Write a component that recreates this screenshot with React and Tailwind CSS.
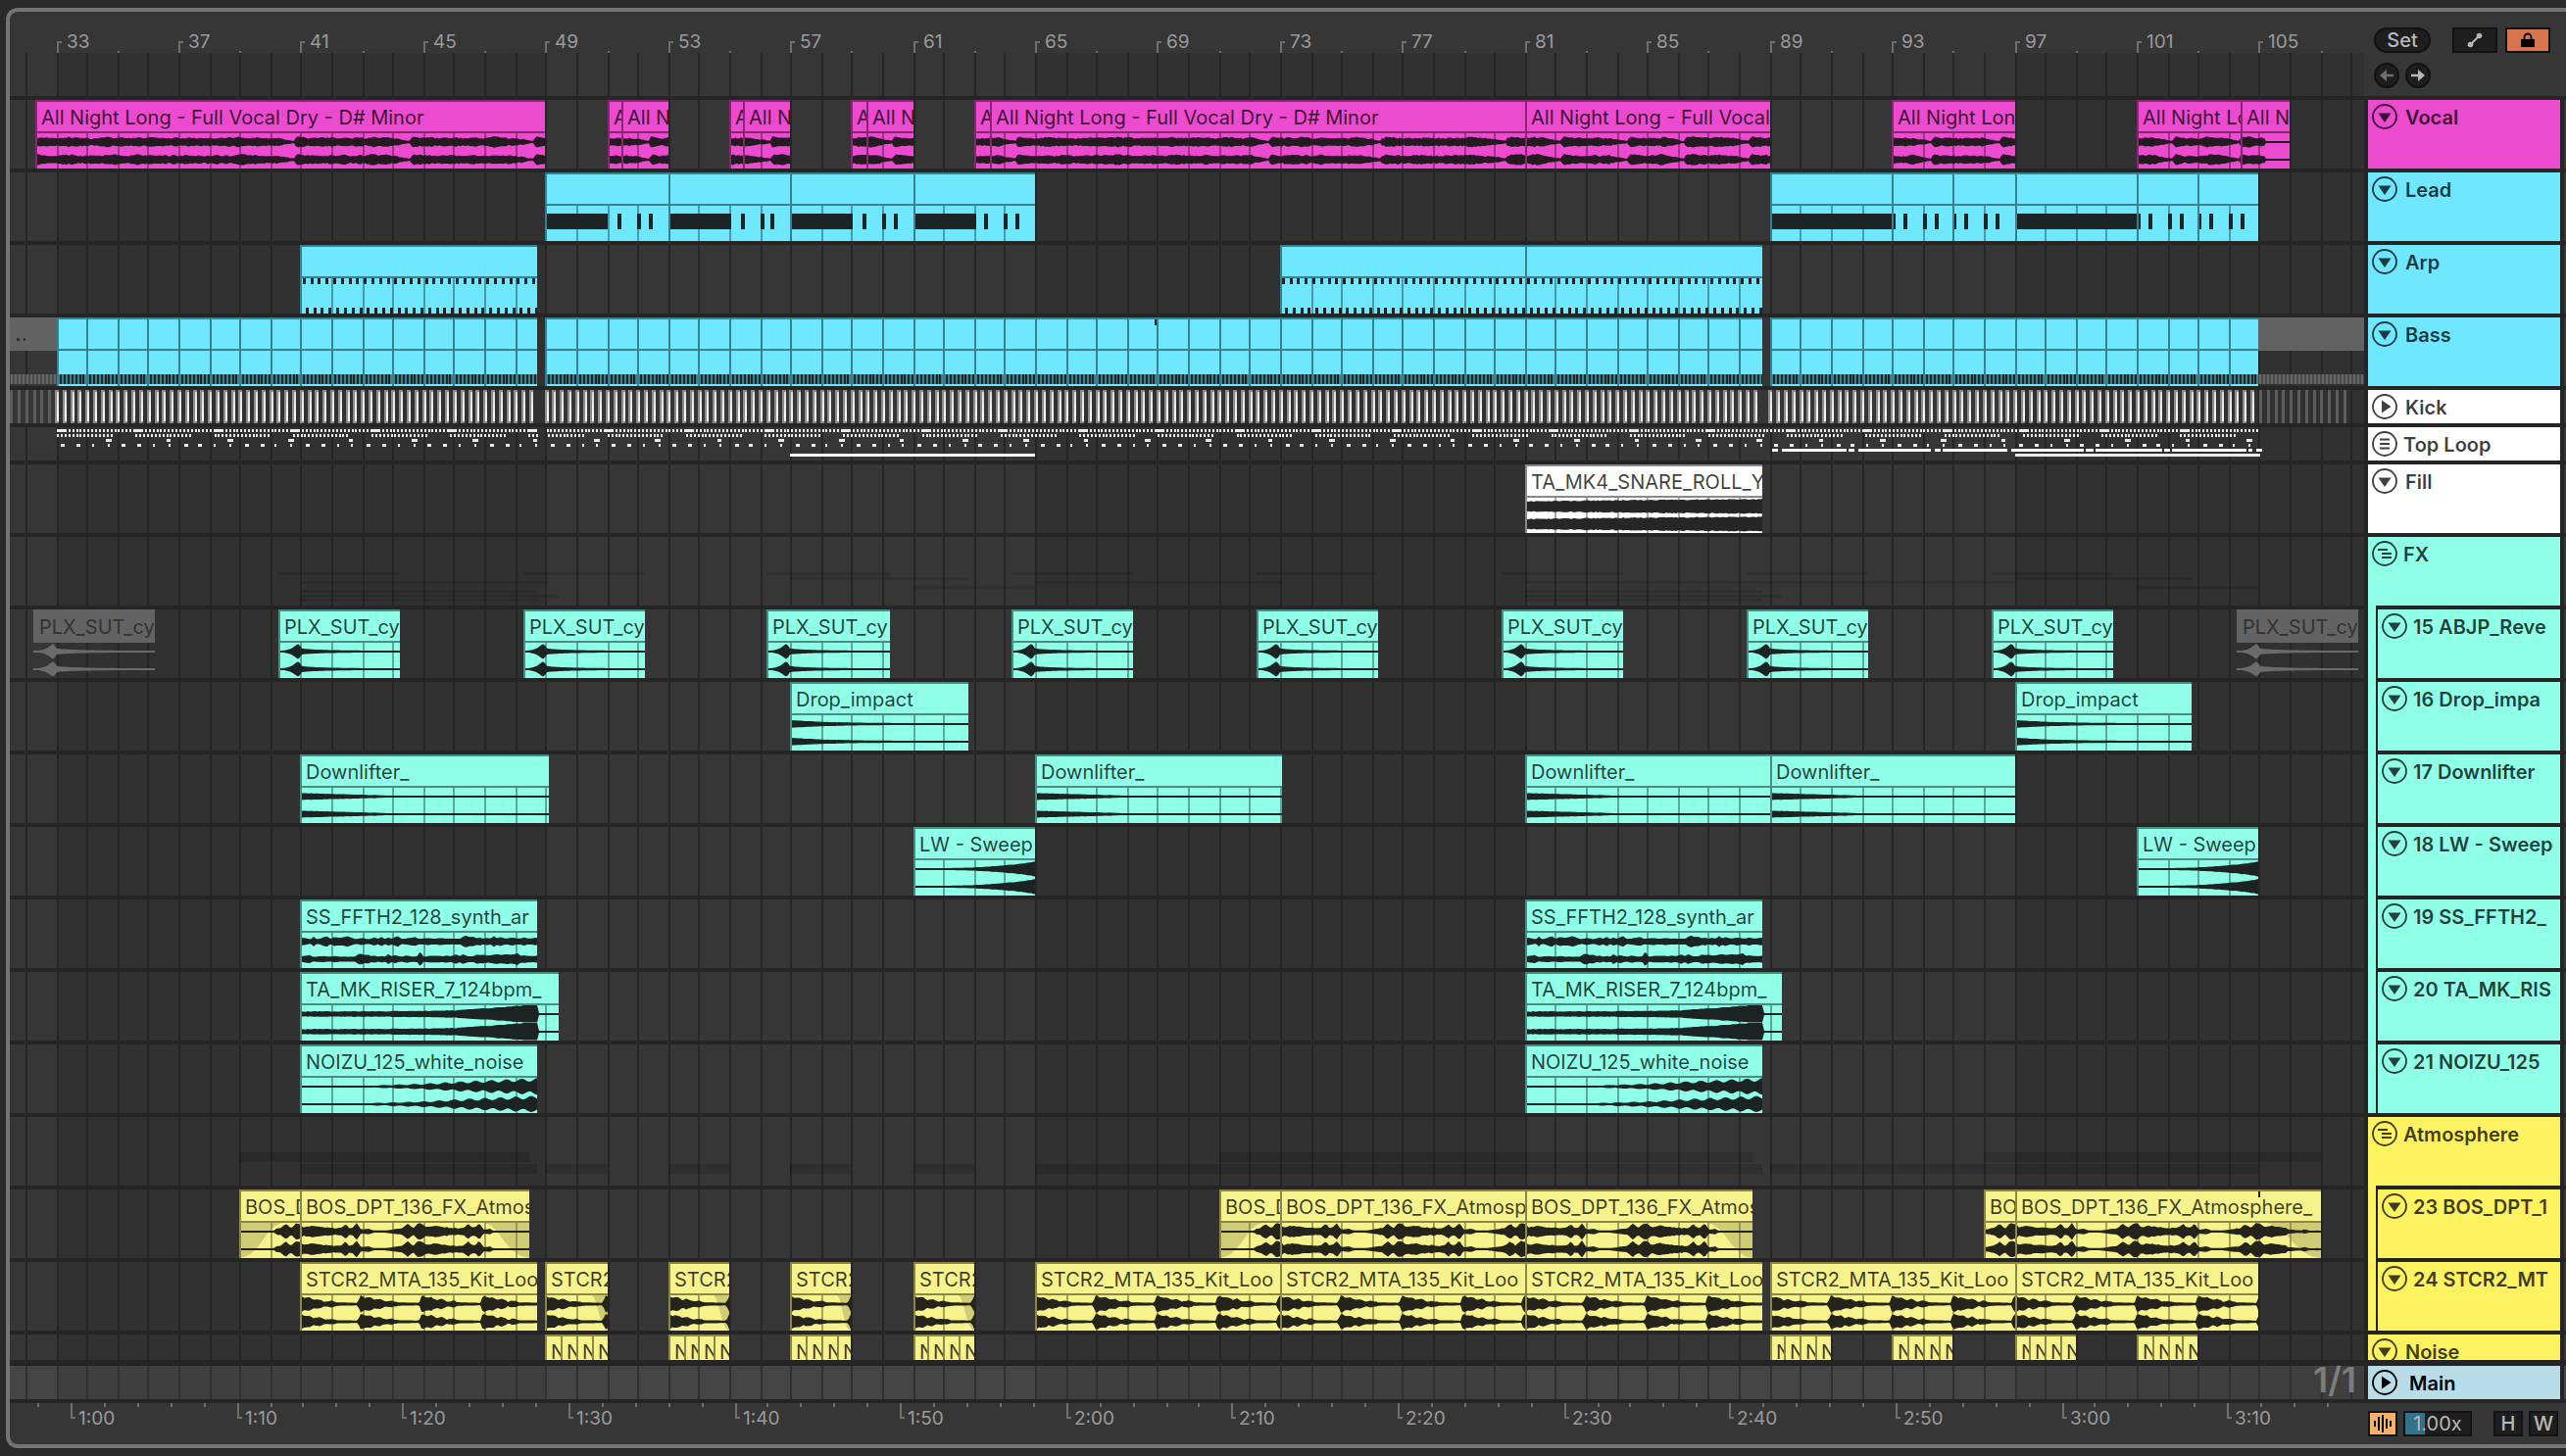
import clsx from 'clsx'

// Timeline geometry: lanes are drawn in LANE_W units and scale with the window
const LANE_W = 2402
const BAR_W = 31.22
const ORIGIN = 47.05

const snap = (v) => Math.round(v / 2) * 2
const rawX = (bar) => ORIGIN + (bar - 33) * BAR_W
const barX = (bar) => snap(rawX(bar))
const timeX = (sec) => snap(62 + (sec - 60) * 16.925)
const pct = (units) => `${(units / LANE_W) * 100}%`
const range = (from, to, step = 1) => {
  const out = []
  for (let v = from; v <= to + 1e-6; v += step) out.push(v)
  return out
}

const BARS = range(32, 108)

const PALETTE = {
  pink: { clip: 'bg-[#ec4bcf]', border: 'border-[#84296f]', head: 'bg-[#ec4bcf]', line: '#84296f', wave: '#241a22' },
  cyan: { clip: 'bg-[#6ee7ff]', border: 'border-[#3a818f]', head: 'bg-[#6ee7ff]', line: '#3a818f', wave: '#1c2426' },
  white: { clip: 'bg-white', border: 'border-[#8a8a8a]', head: 'bg-white', line: '#8a8a8a', wave: '#262626' },
  mint: { clip: 'bg-[#8fffe8]', border: 'border-[#4b8b80]', head: 'bg-[#8fffe8]', line: '#4b8b80', wave: '#1c2423' },
  yellow: { clip: 'bg-[#f7f38c]', border: 'border-[#8a8749]', head: 'bg-[#fdf25f]', line: '#8a8749', wave: '#24241c' },
  blue: { head: 'bg-[#b8dde8]' },
}

/* ---------- waveforms ---------- */

const hash = (n) => {
  const s = Math.sin(n * 127.1 + 11.7) * 43758.5453
  return s - Math.floor(s)
}
const noise = (t) => {
  const i = Math.floor(t)
  const f = t - i
  return hash(i) * (1 - f) + hash(i + 1) * f
}
const keyed = (keys, t) => {
  for (let i = 1; i < keys.length; i++) {
    const [t1, v1] = keys[i]
    const [t0, v0] = keys[i - 1]
    if (t <= t1) return v0 + ((v1 - v0) * (t - t0)) / (t1 - t0)
  }
  return keys[keys.length - 1][1]
}

const VOCAL_DIPS = [40.85, 44.6, 48.65, 52.35, 56.35, 60.35, 64.35, 72.6, 76.3, 80.4, 82.2, 84.35, 86.2, 88.35, 94.3, 96.55, 102.2, 104.35]

const ATMOS = [
  [0, 8], [0.12, 4.5], [0.4, 6], [0.7, 4.5], [1.2, 3.5], [1.35, 4], [1.5, 8], [1.6, 4], [1.72, 4], [1.86, 8.5],
  [2, 2], [2.25, 3], [2.4, 1.2], [2.8, 1.2], [3.1, 2.5], [3.35, 3.5], [3.52, 8], [3.7, 3.5], [3.87, 8.5], [4, 8],
]

const KIT = [
  [0, 9], [0.12, 6.5], [0.3, 7], [0.45, 4], [0.6, 5.5], [0.8, 2.5], [1, 3.5], [1.2, 1.8], [1.6, 1.6], [1.9, 1.2], [1.95, 7], [2, 9],
]

const ENVELOPES = {
  vocal: (bar, t, ch) => {
    if (bar > 105.2) return 1
    let amp = 3 + 2.6 * noise(bar * 7 + ch * 3) * noise(bar * 3 + 50) + 1.3 * hash(Math.floor(bar * 14) + ch)
    for (const dip of VOCAL_DIPS) {
      const d = bar - dip
      if (d > -0.6 && d <= 0) amp *= 0.25 + 0.75 * (-d / 0.6)
      if (d > 0.08 && d < 0.3) amp = Math.max(amp, 6.5 - d * 8)
    }
    return amp
  },
  snare: (bar, t) => 4.9 + t * 0.28 + 1.1 * hash(Math.floor(bar * 16)),
  plx: (bar, t) => {
    if (t < 0.62) return 1 + 7 * Math.pow(t / 0.62, 3)
    if (t < 0.8) return keyed([[0.62, 8], [0.7, 7], [0.72, 4], [0.8, 2.8]], t)
    return 1 + 2 * Math.exp(-(t - 0.8) * 1.4)
  },
  drop: (bar, t) => 1 + 3 * Math.exp(-t * 0.9) + (t < 2 ? 0.3 * noise(t * 20) : 0),
  down: (bar, t) => Math.max(1, 3.4 - t * 0.8) + (t < 2.5 ? 0.3 * noise(t * 20) : 0),
  sweep: (bar, t) => 1 + 6.6 * Math.pow(t / 4, 3.3) + (t > 2 ? 0.5 * noise(t * 30) : 0),
  synth: (bar, t, ch) => 2.3 + 3.2 * Math.pow(noise(t * 9 + ch * 31), 2) + (ch && Math.abs(t - 3.95) < 0.08 ? 3 : 0) + t * 0.12,
  riser: (bar, t) => (t > 7.77 ? 1 : keyed([[0, 2.2], [3, 2.6], [5, 3.4], [6.3, 6], [7.2, 8.2], [7.77, 9.4]], t) + 0.7 * noise(t * 16)),
  noizu: (bar, t, ch) => {
    const base = keyed([[0, 1], [2.4, 1.1], [4, 2.4], [5.5, 4.6], [7.7, 7]], t)
    return base * (1 + (t > 2.4 ? 0.25 : 0) * Math.cos((t - (ch ? 7.05 : 7.25)) * 12.5))
  },
  atmos: (bar, t, ch, end) => {
    const amp = keyed(ATMOS, (((bar - 41) % 4) + 4) % 4)
    const jag = amp > 3 ? 1.2 * (noise(bar * 16 + ch) - 0.5) : 0
    let fade = 1
    if (t < 1.2 && Math.round(bar - t) % 8 === 7) fade = Math.max(0.1, Math.pow(t / 1.6, 2))
    if (end - bar < 1.2 && end % 1 !== 0) fade = Math.max(0.15, (end - bar) / 2)
    return Math.max(1, (amp + jag) * fade)
  },
  kit: (bar, t, ch) => {
    const amp = keyed(KIT, t % 2)
    return Math.max(1, amp * (ch ? 0.92 : 1) + (amp > 2 ? 1.2 * (noise(bar * 14 + ch * 5) - 0.5) : 0))
  },
}

function wavePath(kind, start, end, ch) {
  const x0 = barX(start)
  const x1 = barX(end)
  const mid = ch ? 27 : 9
  const top = []
  const bottom = []
  for (let x = x0; x <= x1; x += 2) {
    const bar = start + (x - x0) / BAR_W
    const amp = Math.min(9, ENVELOPES[kind](bar, bar - start, ch, end))
    top.push(`${x},${(mid - amp).toFixed(1)}`)
    bottom.unshift(`${x},${(mid + amp * 0.95).toFixed(1)}`)
  }
  return `M${top.join('L')}L${bottom.join('L')}Z`
}

/* ---------- note patterns ---------- */

const Note = ({ start, len, y, h, fill = '#1c2426' }) => (
  <rect x={barX(start)} y={y} width={Math.max(2, snap(len * BAR_W))} height={h} fill={fill} />
)

function ClipNotes({ kind, start, end }) {
  if (kind === 'lead') {
    return (
      <>
        <Note start={start} len={2.06} y={8} h={16} />
        {[2.36, 3, 3.36].map((o) => <Note key={o} start={start + o} len={0.1} y={8} h={16} />)}
      </>
    )
  }
  if (kind === 'hold') return <Note start={start} len={4} y={8} h={16} />
  if (kind === 'stab') {
    return [0, 0.38, 1, 1.4].map((o) => <Note key={o} start={start + o} len={0.1} y={8} h={16} />)
  }
  if (kind === 'arp') {
    return range(start, end - 0.05, 0.25).map((b) => (
      <g key={b}>
        <rect x={rawX(b) + 2} y="0" width="3" height="6" fill="#1c2426" />
        <rect x={rawX(b + 0.13) + 1} y="30" width="3" height="6" fill="#1c2426" />
      </g>
    ))
  }
  if (kind === 'bass') {
    return (
      <>
        <rect x={barX(start)} y="24" width={BAR_W + 2} height="10" fill="#3a818f" />
        {range(0, 7).map((i) => (
          <rect key={i} x={barX(start) + 3 + i * 3.9} y="24" width="2" height="10" fill="#1c2426" />
        ))}
      </>
    )
  }
  return null
}

/* ---------- clips ---------- */

function Clip({ start, end, label, kind, color, fadeIn, fadeOut, muted }) {
  const c = PALETTE[color]
  const x0 = barX(start)
  const x1 = barX(end)
  const inset = muted ? 0 : 2
  const isWave = kind in ENVELOPES
  return (
    <div
      className={clsx(
        'absolute top-0 h-full overflow-hidden',
        muted ? 'text-[#333333]' : ['border-t-2 border-l-2 text-black/75', c.clip, c.border],
      )}
      style={{ left: pct(x0), width: pct(x1 - x0) }}
    >
      <div
        className={clsx(
          'overflow-hidden text-xl whitespace-nowrap',
          muted ? 'h-[34px] bg-[#636363] pl-1.5 leading-9' : ['h-8 border-b-2 pl-1 leading-8', c.border],
        )}
      >
        {label}
      </div>
      <svg
        className="block h-9 w-full"
        viewBox={`${x0 + inset} 0 ${x1 - x0 - inset} 36`}
        preserveAspectRatio="none"
        aria-hidden="true"
      >
        {fadeIn && (
          <path
            d={`M${x0},0H${barX(start + fadeIn)}C${barX(start + fadeIn * 0.6)},4 ${barX(start + fadeIn * 0.5)},34 ${x0},36Z`}
            fill="#000" opacity="0.16"
          />
        )}
        {fadeOut && (
          <path
            d={`M${x1},0H${barX(end - fadeOut)}C${barX(end - fadeOut * 0.6)},4 ${barX(end - fadeOut * 0.5)},34 ${x1},36Z`}
            fill="#000" opacity="0.16"
          />
        )}
        <g shapeRendering="crispEdges">
          {!muted && BARS.filter((b) => b > start && b < end).map((b) => (
            <rect key={b} x={barX(b)} y="0" width="2" height="36" fill={c.line} opacity="0.75" />
          ))}
          {!isWave && <ClipNotes kind={kind} start={start} end={end} />}
        </g>
        {isWave && [0, 1].map((ch) => (
          <path key={ch} d={wavePath(kind, start, end, ch)} fill={muted ? '#6b6b6b' : c.wave} />
        ))}
      </svg>
    </div>
  )
}

/* ---------- lanes drawn without clips ---------- */

function LaneSvg({ height, children }) {
  return (
    <svg
      className="absolute inset-0 h-full w-full"
      viewBox={`0 0 ${LANE_W} ${height}`}
      preserveAspectRatio="none"
      shapeRendering="crispEdges"
      aria-hidden="true"
    >
      {children}
    </svg>
  )
}

function LaneGrid({ light = '#363636', dark = '#313131', line = '#252525' }) {
  return (
    <LaneSvg height={1}>
      <rect x="0" y="0" width={LANE_W} height="1" fill={light} />
      {[33, 65, 97].map((b) => (
        <rect key={b} x={barX(b)} y="0" width={16 * BAR_W} height="1" fill={dark} />
      ))}
      {BARS.map((b) => <rect key={b} x={barX(b)} y="0" width="2" height="1" fill={line} />)}
    </LaneSvg>
  )
}

function KickPattern() {
  return (
    <LaneSvg height={34}>
      <defs>
        <linearGradient id="kick" x1="0" y1="0" x2="0" y2="1">
          <stop offset="0" stopColor="#d8d8d8" />
          <stop offset="1" stopColor="#ffffff" />
        </linearGradient>
      </defs>
      {range(31.5, 107.75, 0.25).map((b) => {
        if ((b > 48.6 && b < 49) || (b > 88.6 && b < 89)) return null
        const x = Math.round(rawX(b))
        if (b < 33 || b >= 105) return <rect key={b} x={x} y="0" width="3" height="34" fill="#5c5c5c" />
        return (
          <g key={b}>
            <rect x={x - 1} y="0" width="4" height="34" fill="#8c8c8c" />
            <rect x={x + 1} y="2" width="2" height="30" fill="url(#kick)" />
          </g>
        )
      })}
    </LaneSvg>
  )
}

const SHAKER = [
  [89.1, 89.3], [89.38, 91.55], [91.6, 91.8], [91.88, 94.05], [94.1, 94.3], [94.38, 94.58], [94.63, 96.8],
  [96.88, 99.3], [99.36, 99.56], [99.64, 101.82], [101.88, 102.08], [102.16, 104.58], [104.66, 104.8], [104.88, 105.1],
]

function TopLoopPattern() {
  const gap = (b) => b > 48.7 && b < 49
  const cycles = range(0, 27).map((k) => 33 + k * 2.57)
  return (
    <LaneSvg height={34}>
      <g fill="#e9e9e6">
        {range(33, 104.95, 0.125).filter((b) => !gap(b)).map((b) => (
          <rect key={b} x={Math.round(rawX(b)) + 1} y="2" width="2" height="3" />
        ))}
        {cycles.map((b) => <rect key={b} x={barX(b)} y="2" width="8" height="3" />)}
        {cycles.flatMap((c) => range(c, Math.min(c + 1.85, 104.9), 0.125)).filter((b) => !gap(b)).map((b) => (
          <rect key={b} x={Math.round(rawX(b)) + 1} y="7" width="2" height="3" />
        ))}
        {range(34.6, 104.9, 2).map((b, i) => (
          <rect key={b} x={barX(b)} y="12" width={i % 3 === 1 ? 4 : 6} height="3" />
        ))}
        {range(33.17, 105, 0.5).map((b, i) => (
          <rect key={b} x={barX(b)} y="17" width={i % 4 < 2 ? 4 : 2} height="3" />
        ))}
      </g>
      {SHAKER.map(([a, b]) => (
        <rect key={a} x={barX(a)} y="22" width={barX(b) - barX(a)} height="3" fill="#ffffff" />
      ))}
      <rect x={barX(57)} y="27" width={8 * BAR_W} height="3" fill="#ffffff" />
      <rect x={barX(97)} y="27" width={8 * BAR_W} height="3" fill="#e9e9e6" />
    </LaneSvg>
  )
}

// Collapsed view of the clips of the grouped tracks
function GroupOverview({ tracks, top, pitch, size }) {
  return (
    <LaneSvg height={70}>
      {tracks.flatMap((track, i) =>
        track.clips.filter((c) => !c.muted).map((c) => (
          <rect
            key={`${i}-${c.start}`}
            x={barX(c.start)}
            y={top + i * pitch}
            width={barX(c.end) - barX(c.start)}
            height={size}
            fill="#000"
            opacity="0.13"
          />
        )),
      )}
    </LaneSvg>
  )
}

function BassTails() {
  return (
    <LaneSvg height={70}>
      {[[0, barX(33)], [barX(105), LANE_W]].map(([a, b]) => (
        <g key={a}>
          <rect x={a} y="0" width={b - a} height="34" fill="#636363" />
          <rect x={a} y="58" width={b - a} height="10" fill="#4a4a4a" />
          {range(a + 1, b - 3, 4).map((x) => <rect key={x} x={x} y="58" width="2" height="10" fill="#666666" />)}
        </g>
      ))}
      <rect x="7" y="21" width="3" height="3" fill="#333333" />
      <rect x="14" y="21" width="2" height="3" fill="#333333" />
    </LaneSvg>
  )
}

/* ---------- session data ---------- */

const clips = (spans, rest) => spans.map(([start, end, extra]) => ({ start, end, ...rest, ...extra }))

const perBar = (from, to) => range(from, Math.floor(to)).map((b) => [b, Math.min(b + 1, to)]).filter(([a, b]) => b > a)

const fxTracks = [
  {
    name: '15 ABJP_Reve',
    clips: clips(
      range(32.25, 104.25, 8).map((b) => [b, b + 3.98, { muted: b < 33 || b > 104 }]),
      { label: 'PLX_SUT_cy', kind: 'plx' },
    ),
  },
  { name: '16 Drop_impa', clips: clips([[57, 62.8], [97, 102.8]], { label: 'Drop_impact', kind: 'drop' }) },
  {
    name: '17 Downlifter',
    clips: clips([[41, 49.1], [65, 73.1], [81, 89], [89, 97]], { label: 'Downlifter_', kind: 'down' }),
  },
  { name: '18 LW - Sweep', clips: clips([[61, 65], [101, 105]], { label: 'LW - Sweep U', kind: 'sweep' }) },
  { name: '19 SS_FFTH2_', clips: clips([[41, 48.72], [81, 88.76]], { label: 'SS_FFTH2_128_synth_ar', kind: 'synth' }) },
  { name: '20 TA_MK_RIS', clips: clips([[41, 49.4], [81, 89.4]], { label: 'TA_MK_RISER_7_124bpm_', kind: 'riser' }) },
  { name: '21 NOIZU_125', clips: clips([[41, 48.72], [81, 88.76]], { label: 'NOIZU_125_white_noise', kind: 'noizu' }) },
]

const atmosTracks = [
  {
    name: '23 BOS_DPT_1',
    clips: clips(
      [
        [39, 41, { fadeIn: 1.4 }], [41, 48.45, { fadeOut: 1.45 }],
        [71, 73, { fadeIn: 1.4 }], [73, 81], [81, 88.45, { fadeOut: 1.45 }],
        [96, 97], [97, 107.05, { fadeOut: 1.8 }],
      ],
      { label: 'BOS_DPT_136_FX_Atmosphere_', kind: 'atmos' },
    ),
  },
  {
    name: '24 STCR2_MT',
    clips: clips(
      [
        [41, 48.72], [49, 51, { fadeOut: 0.5 }], [53, 55, { fadeOut: 0.5 }], [57, 59, { fadeOut: 0.5 }],
        [61, 63, { fadeOut: 0.5 }], [65, 73], [73, 81], [81, 88.76], [89, 97], [97, 105],
      ],
      { label: 'STCR2_MTA_135_Kit_Loo', kind: 'kit' },
    ),
  },
]

const VOCAL_LABEL = 'All Night Long - Full Vocal Dry - D# Minor'

const TRACKS = [
  {
    name: 'Vocal',
    color: 'pink',
    clips: clips(
      [
        [32.35, 49], [51, 51.45], [51.45, 53], [55, 55.45], [55.45, 57], [59, 59.5], [59.5, 61],
        [63, 63.5], [63.5, 81], [81, 89], [93, 97], [101, 104.4], [104.4, 106],
      ],
      { label: VOCAL_LABEL, kind: 'vocal' },
    ),
  },
  {
    name: 'Lead',
    color: 'cyan',
    clips: [
      ...clips([[49, 53], [53, 57], [57, 61], [61, 65]], { kind: 'lead' }),
      ...clips([[89, 93], [97, 101]], { kind: 'hold' }),
      ...clips([[93, 95], [95, 97], [101, 103], [103, 105]], { kind: 'stab' }),
    ],
  },
  { name: 'Arp', color: 'cyan', clips: clips([[41, 48.72], [73, 81], [81, 88.76]], { kind: 'arp' }) },
  {
    name: 'Bass',
    color: 'cyan',
    under: <BassTails />,
    clips: clips([...perBar(33, 48.72), ...perBar(49, 88.76), ...perBar(89, 105)], { kind: 'bass' }),
  },
  { name: 'Kick', color: 'white', icon: 'play', short: true, clips: [], under: <KickPattern /> },
  { name: 'Top Loop', color: 'white', icon: 'list', short: true, clips: [], under: <TopLoopPattern /> },
  { name: 'Fill', color: 'white', clips: clips([[81, 88.76]], { label: 'TA_MK4_SNARE_ROLL_Y', kind: 'snare' }) },
  {
    name: 'FX',
    color: 'mint',
    icon: 'group',
    clips: [],
    joined: true,
    under: <GroupOverview tracks={fxTracks} top={36} pitch={4.5} size={3} />,
  },
  ...fxTracks.map((t, i) => ({ ...t, color: 'mint', child: true, joined: i < fxTracks.length - 1 })),
  {
    name: 'Atmosphere',
    color: 'yellow',
    icon: 'group',
    clips: [],
    joined: true,
    under: <GroupOverview tracks={atmosTracks} top={36} pitch={12} size={10} />,
  },
  ...atmosTracks.map((t, i) => ({ ...t, color: 'yellow', child: true, joined: i < atmosTracks.length - 1 })),
  {
    name: 'Noise',
    color: 'yellow',
    cut: true,
    clips: clips(
      [49, 53, 57, 61, 89, 93, 97, 101].flatMap((b) => [0, 0.5, 1, 1.5].map((o) => [b + o, b + o + 0.5])),
      { label: 'Noise', kind: 'none' },
    ),
  },
]

/* ---------- track headers ---------- */

function FoldIcon({ type }) {
  return (
    <svg viewBox="0 0 26 26" className="block size-[26px]" fill="none" stroke="currentColor" strokeWidth="1.8" aria-hidden="true">
      <circle cx="13" cy="13" r="12" />
      {type === 'fold' && <path d="M6.5 9.5h13L13 19z" fill="currentColor" stroke="none" />}
      {type === 'play' && <path d="M10 6.500v13l9.500-6.500z" fill="currentColor" stroke="none" />}
      {type === 'list' && <path d="M8 8.500h10M8 13h10M8 17.500h10" />}
      {type === 'group' && <path d="M6 9h10M10 13h10M10 17h10" />}
    </svg>
  )
}

function TrackHeader({ name, color, icon = 'fold', child, joined }) {
  const c = PALETTE[color]
  const isGroupIcon = icon === 'group' || icon === 'list'
  return (
    <div className="relative flex w-49 shrink-0">
      {child && <div className={clsx('mr-0.5 w-2', c.head, !joined && 'mb-1')} />}
      {!child && joined && <div className={clsx('absolute bottom-0 left-0 h-1 w-2', c.head)} />}
      <div
        className={clsx(
          'mb-1 flex min-w-0 flex-1 items-start overflow-hidden pt-1 pl-1',
          c.head,
          color === 'blue' ? 'text-black' : 'text-black/75',
        )}
      >
        <button type="button" aria-label={`Unfold ${name}`} className="shrink-0">
          <FoldIcon type={icon} />
        </button>
        <span
          className={clsx(
            'text-xl leading-7 font-semibold whitespace-nowrap',
            color === 'blue' ? 'ml-3' : isGroupIcon || child ? 'ml-1.5' : 'ml-2',
          )}
        >
          {name}
        </span>
      </div>
    </div>
  )
}

function TrackRow({ track }) {
  const height = track.cut ? 'h-[30px]' : track.short ? 'h-[38px]' : 'h-[74px]'
  return (
    <div className={clsx('flex', height)}>
      <div className="relative mb-1 min-w-0 flex-1 overflow-hidden">
        <LaneGrid />
        {track.under}
        {track.clips.map((clip) => <Clip key={clip.start} color={track.color} {...clip} />)}
        {track.name === 'Bass' && (
          <div className="absolute top-0.5 h-1.5 w-0.5 bg-[#1c2426]" style={{ left: pct(barX(69) - 2) }} />
        )}
        {track.name === '23 BOS_DPT_1' && (
          <div className="absolute top-0.5 h-1.5 w-0.5 bg-[#24241c]" style={{ left: pct(barX(105)) }} />
        )}
      </div>
      <div className="w-1" />
      <TrackHeader {...track} />
      <div className="mb-1 ml-1 w-0.5 bg-[#363636]" />
    </div>
  )
}

/* ---------- rulers ---------- */

function BeatRuler() {
  return (
    <div className="relative min-w-0 flex-1 pt-[42px]">
      <div className="relative h-11">
        <LaneGrid />
      </div>
      <div className="absolute inset-x-0 top-0 h-[42px] overflow-hidden">
        {range(33, 105, 4).map((bar) => (
          <div key={bar} className="absolute bottom-0 h-3 border-l-2 border-[#6e6e6e]" style={{ left: pct(barX(bar)) }}>
            <div className="h-0.5 w-[3px] bg-[#6e6e6e]" />
            <span className="absolute bottom-0 left-2 text-[19px] leading-[22px] text-[#9a9a9a]">{bar}</span>
          </div>
        ))}
        {range(35, 107, 4).map((bar) => (
          <div key={bar} className="absolute bottom-0 h-0.5 w-0.5 bg-[#6e6e6e]" style={{ left: pct(barX(bar)) }} />
        ))}
      </div>
    </div>
  )
}

function TimeRuler() {
  const format = (s) => `${Math.floor(s / 60)}:${String(s % 60).padStart(2, '0')}`
  return (
    <div className="relative min-w-0 flex-1 overflow-hidden">
      {range(58, 196, 2).filter((s) => s % 10 !== 0).map((s) => (
        <div key={s} className="absolute top-0 h-1 w-0.5 bg-[#6e6e6e]" style={{ left: pct(timeX(s)) }} />
      ))}
      {range(60, 190, 10).map((s) => (
        <div key={s} className="absolute top-0 flex h-4 items-end border-l-2 border-[#6e6e6e]" style={{ left: pct(timeX(s)) }}>
          <div className="h-0.5 w-[3px] bg-[#6e6e6e]" />
          <span className="absolute top-1 left-1.5 text-[19px] leading-6 text-[#9a9a9a]">{format(s)}</span>
        </div>
      ))}
    </div>
  )
}

/* ---------- toolbar pieces ---------- */

const control = 'flex h-[26px] items-center justify-center border-2 border-[#121212] bg-[#1e1e1e] text-[#b8b8b8]'

function ArrowIcon({ flip }) {
  return (
    <svg viewBox="0 0 22 22" className={clsx('size-[22px]', flip && '-scale-x-100')} fill="currentColor" aria-hidden="true">
      <path d="M4 9.800h7V5l7 6-7 6v-4.800H4z" />
    </svg>
  )
}

function CornerControls() {
  return (
    <div className="flex w-[206px] shrink-0 flex-col gap-2.5 pt-4 pl-2.5">
      <div className="flex">
        <button type="button" className={clsx(control, 'w-[58px] rounded-full text-xl font-medium')}>Set</button>
        <button type="button" aria-label="Automation mode" className={clsx(control, 'ml-[22px] w-[46px]')}>
          <svg viewBox="0 0 20 20" className="size-5" fill="currentColor" stroke="currentColor" aria-hidden="true">
            <path d="M5.500 14.500L14.500 5.500" strokeWidth="2" />
            <circle cx="5.500" cy="14.500" r="2.800" stroke="none" />
            <circle cx="14.500" cy="5.500" r="2.800" stroke="none" />
          </svg>
        </button>
        <button
          type="button"
          aria-label="Lock envelopes"
          className="ml-2 flex h-[26px] w-[46px] items-center justify-center border-2 border-[#121212] bg-[#d97450] text-black"
        >
          <svg viewBox="0 0 18 18" className="size-[18px]" aria-hidden="true">
            <rect x="2" y="8" width="14" height="8" fill="currentColor" />
            <path d="M5.500 9V6a3.500 3.500 0 0 1 7 0v3" fill="none" stroke="currentColor" strokeWidth="1.800" />
          </svg>
        </button>
      </div>
      <div className="flex gap-1.5">
        <button type="button" aria-label="Previous locator" className={clsx(control, 'w-[26px] rounded-full')}>
          <span className="text-[#6e6e6e]"><ArrowIcon flip /></span>
        </button>
        <button type="button" aria-label="Next locator" className={clsx(control, 'w-[26px] rounded-full')}>
          <ArrowIcon />
        </button>
      </div>
    </div>
  )
}

function ZoomControls() {
  return (
    <div className="flex w-[206px] shrink-0 pt-2 pl-1">
      <button
        type="button"
        aria-label="Audio scrub"
        className="flex h-[26px] w-[30px] items-center justify-center border-2 border-[#121212] bg-[#f8b068] text-black"
      >
        <svg viewBox="0 0 20 20" className="size-5" stroke="currentColor" strokeWidth="2" aria-hidden="true">
          <path d="M2 7v6M6 3v14M10 1v18M14 5v10M18 7v6" />
        </svg>
      </button>
      <input
        aria-label="Waveform zoom"
        defaultValue="1.00x"
        className="ml-1.5 h-[26px] w-[70px] border-2 border-[#121212] bg-[linear-gradient(to_right,#31738a_20px,#1e1e1e_20px)] text-center text-xl text-[#b8b8b8]"
      />
      <button type="button" className={clsx(control, 'ml-[22px] w-[30px] text-xl font-medium')}>H</button>
      <button type="button" className={clsx(control, 'ml-1.5 w-[30px] text-xl font-medium')}>W</button>
    </div>
  )
}

export default function App() {
  return (
    <div className="min-h-screen overflow-hidden bg-[#2a2a2a] py-2 pl-1.5 font-['Inter',sans-serif]">
      <main className="overflow-hidden rounded-l-xl border-y-4 border-l-4 border-[#757575] bg-[#363636]">
        <div className="flex">
          <BeatRuler />
          <CornerControls />
        </div>

        <div className="border-t-4 border-[#252525] bg-[#252525]">
          {TRACKS.map((track) => <TrackRow key={track.name} track={track} />)}

          {/* Main track */}
          <div className="mt-0.5 flex h-[38px]">
            <div className="relative mb-1 min-w-0 flex-1">
              <LaneGrid light="#454545" dark="#3f3f3f" line="#2f2f2f" />
              <span className="absolute right-2 bottom-0 text-4xl leading-10 font-semibold text-[#7c7c7c]">1/1</span>
            </div>
            <div className="w-1" />
            <TrackHeader name="Main" color="blue" icon="play" />
            <div className="mb-1 ml-1 w-0.5 bg-[#454545]" />
          </div>
        </div>

        <div className="flex h-[42px]">
          <TimeRuler />
          <ZoomControls />
        </div>
      </main>
    </div>
  )
}
